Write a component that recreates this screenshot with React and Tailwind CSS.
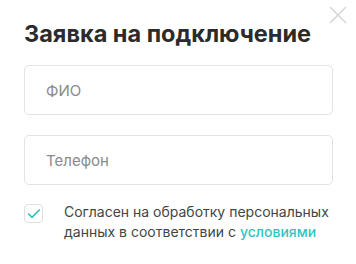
import { Check } from 'lucide-react';

const App = () => {
  return (
    <div className="relative w-[356px] h-[264px] bg-white" style={{ fontFamily: 'Inter, "Noto Sans", sans-serif' }}>
      <button className="absolute top-[6px] left-[329px] text-[#d6d6d6]">
        <svg width="18" height="18" viewBox="0 0 18 18" fill="none" stroke="currentColor" strokeWidth="1.6">
          <path d="M1 1 17 17M17 1 1 17" />
        </svg>
      </button>

      <div className="px-6 pt-[19px]">
        <h2 className="text-[23.5px] leading-[30px] font-bold text-[#2b2b2b]">Заявка на подключение</h2>

        <div className="mt-[16px] flex flex-col gap-5">
          <input
            placeholder="ФИО"
            className="w-[309px] h-[50px] rounded-[5px] border border-[#e3e3e3] px-[21px] text-[15px] text-[#333] placeholder-[#8a8a8a] outline-none"
          />
          <input
            placeholder="Телефон"
            className="w-[309px] h-[50px] rounded-[5px] border border-[#e3e3e3] px-[21px] text-[15px] text-[#333] placeholder-[#8a8a8a] outline-none"
          />
        </div>

        <div className="mt-[19px] flex items-start gap-[21px]">
          <div className="w-[19px] h-[19px] shrink-0 rounded-[4px] border border-[#e0e0e0] flex items-center justify-center">
            <Check className="w-[16px] h-[16px] text-[#2ec4c4]" strokeWidth={2.5} />
          </div>
          <p className="text-[14px] leading-[20px] text-[#454545] -mt-[2px]">
            Согласен на обработку персональных данных в соответствии с{' '}
            <a className="text-[#2ec4c4] font-medium">условиями</a>
          </p>
        </div>
      </div>
    </div>
  );
};

export default App;
